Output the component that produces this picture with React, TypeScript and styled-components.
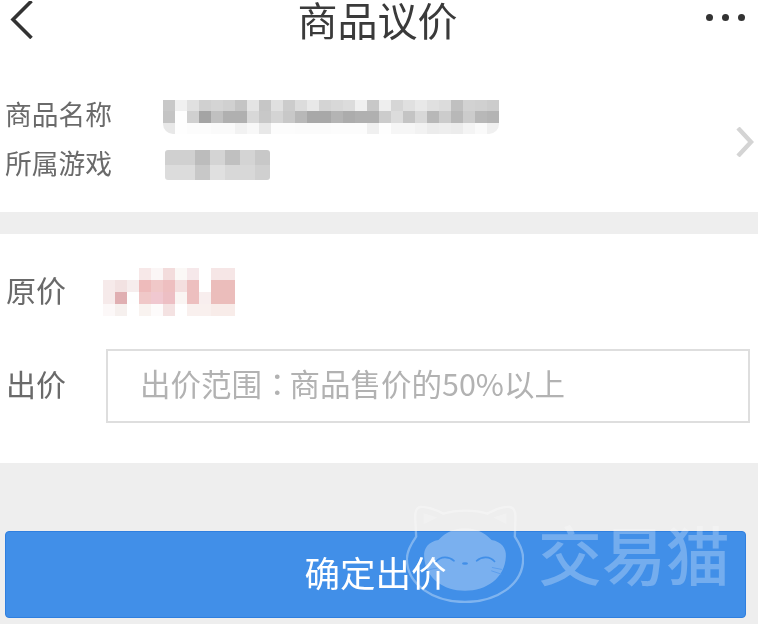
import styled, { createGlobalStyle } from 'styled-components'

const NAME_CELLS = [
  ['c8', 'f0', 'e0', 'd0', 'd4', 'd0', 'c4', 'e4', 'c6', 'e0', 'cc', 'dc', 'e8', 'd4', 'd8', 'dc', 'f0', 'c8', 'ee', 'd6', 'e0', 'e8', 'e0', 'dc', 'c0', 'd2', 'd0', 'cc'],
  ['c4', 'fe', 'd0', 'a4', 'c0', 'b0', 'b0', 'd8', 'c8', 'd4', 'c8', 'b8', 'a8', 'a8', 'b4', 'ac', 'b0', 'b0', 'cc', 'dc', 'c4', 'd8', 'b8', 'cc', 'b8', 'cc', 'b8', 'b4'],
  ['e8', 'fe', 'fc', 'fc', 'fa', 'fa', 'f2', 'f8', 'e8', 'fc', 'fc', 'fb', 'fb', 'fb', 'fc', 'fc', 'fc', 'f0', 'fe', 'f6', 'f6', 'f2', 'ec', 'ee', 'ec', 'f4', 'fa', 'f0'],
].map((row) => row.map((v) => `#${v}${v}${v}`))

const GAME_CELLS = [
  ['d0', 'd0', 'bc', 'd4', 'c0', 'd4', 'c8'],
  ['dc', 'dc', 'c8', 'e0', 'd8', 'd8', 'd0'],
].map((row) => row.map((v) => `#${v}${v}${v}`))

const PRICE_CELLS = [
  ['#ffffff', '#ffffff', '#ffffff', '#f7e8e8', '#fbf6f6', '#f3dcdc', '#fbf8f6', '#f6e8ea', '#ffffff', '#f6e6e6', '#f6e6e6'],
  ['#f6eaea', '#f2e2e2', '#f6eded', '#eebbbb', '#f0c8c8', '#eebfc0', '#f4dfdf', '#edbfbf', '#ffffff', '#ebbdbb', '#ebbdbb'],
  ['#f6eaea', '#e0afb2', '#fefefe', '#f0c8c8', '#f0c8d0', '#edbfc4', '#faf5f3', '#edbfbf', '#f8eeee', '#ebbdbb', '#ebbdbb'],
  ['#fcf8f8', '#f6f0ee', '#ffffff', '#f9f3f0', '#fdfbfb', '#f4e2e2', '#ffffff', '#f9f0ee', '#f9f0ee', '#f8ece9', '#f8ece9'],
]

const GlobalStyle = createGlobalStyle`
  html, body {
    margin: 0;
    padding: 0;
    background: #fff;
  }

  body {
    font-family: "Noto Sans CJK SC", "Noto Sans", sans-serif;
  }
`

const Page = styled.div`
  position: relative;
  width: 758px;
  height: 624px;
  overflow: hidden;
  display: flex;
  flex-direction: column;
  filter: blur(0.4px);
`

const Header = styled.header`
  height: 40px;
  padding: 0 13px 0 10px;
  display: grid;
  grid-template-columns: 1fr auto 1fr;
  align-items: center;
`

const Title = styled.h1`
  margin: 0;
  padding-bottom: 2px;
  font-size: 40px;
  line-height: 38px;
  font-weight: 400;
  color: #3a3a3a;
`

const Dots = styled.div`
  display: flex;
  justify-content: flex-end;
  gap: 9px;
  margin-top: -6px;
`

const Dot = styled.span`
  width: 7px;
  height: 7px;
  border-radius: 50%;
  background: #333;
`

const GoodsSection = styled.section`
  height: 172px;
  padding: 58px 4px 0 5px;
  box-sizing: border-box;
  display: flex;
  justify-content: space-between;
`

const GoodsRows = styled.div`
  display: flex;
  flex-direction: column;
  gap: 14px;
`

const GoodsRow = styled.div`
  height: 35px;
  display: flex;
  align-items: center;
  gap: 51px;
`

const GoodsLabel = styled.span`
  padding-bottom: 4px;
  font-size: 26.75px;
  line-height: 31px;
  color: #6a6a6a;
`

const Arrow = styled.svg`
  width: 18px;
  height: 30px;
  margin-top: 29px;
`

const Mosaic = styled.div<{ $cols: number; $cell: number; $rowHeight: number }>`
  display: grid;
  grid-template-columns: repeat(${({ $cols }) => $cols}, ${({ $cell }) => $cell}px);
  grid-auto-rows: ${({ $rowHeight }) => $rowHeight}px;
  flex-shrink: 0;
`

const NameMosaic = styled(Mosaic)`
  margin-top: 3px;
  border-radius: 0 0 10px 10px;
  overflow: hidden;
`

const GameMosaic = styled(Mosaic)`
  margin-left: 2px;
  border-radius: 3px;
  overflow: hidden;
`

const PriceMosaic = styled(Mosaic)`
  margin-left: -3px;
`

const Cell = styled.i<{ $color: string }>`
  background: ${({ $color }) => $color};
`

const Divider = styled.div`
  height: 22px;
  background: #eeeeee;
`

const OfferSection = styled.section`
  height: 229px;
  padding: 34px 8px 0 6px;
  box-sizing: border-box;
  display: flex;
  flex-direction: column;
  gap: 33px;
`

const OfferRow = styled.div<{ $height: number }>`
  height: ${({ $height }) => $height}px;
  display: flex;
  align-items: center;
`

const OfferLabel = styled.span`
  width: 100px;
  flex-shrink: 0;
  padding-bottom: 6px;
  font-size: 30px;
  line-height: 36px;
  color: #6a6a6a;
`

const OfferInput = styled.div`
  flex: 1;
  height: 74px;
  box-sizing: border-box;
  border: 2px solid #dedede;
  padding: 0 0 6px 32px;
  display: flex;
  align-items: center;
  font-size: 30.5px;
  color: #b2b2b2;
  white-space: nowrap;
`

const CenteredColon = styled.span`
  margin-right: -3px;
  font-family: "Noto Sans CJK TC", sans-serif;
`

const Footer = styled.footer`
  flex: 1;
  background: #eeeeee;
  padding: 68px 12px 0 5px;
`

const SubmitButton = styled.button`
  display: block;
  width: 100%;
  height: 87px;
  padding: 0 0 6px;
  border: 1px solid #2f7fdf;
  border-radius: 4px;
  background: #418fe8;
  color: #fff;
  font-family: inherit;
  font-size: 35.5px;
  line-height: 80px;
`

const Watermark = styled.div`
  position: absolute;
  left: 406px;
  top: 505px;
  display: flex;
  align-items: flex-start;
  gap: 14px;
  pointer-events: none;
`

const CatLogo = styled.svg`
  width: 118px;
  height: 98px;
`

const WatermarkText = styled.span`
  margin-top: 11px;
  font-size: 64px;
  line-height: 72px;
  font-weight: 500;
  color: rgba(255, 255, 255, 0.27);
  white-space: nowrap;
`

const PixelBlock = ({ cells, block: Block, cell, rowHeight }: {
  cells: string[][];
  block: typeof Mosaic;
  cell: number;
  rowHeight: number;
}) => (
  <Block $cols={cells[0].length} $cell={cell} $rowHeight={rowHeight} aria-hidden>
    {cells.flat().map((color, i) => <Cell key={i} $color={color} />)}
  </Block>
)

const CatMark = () => (
  <CatLogo viewBox="18 30 354 295">
    <path
      d="M60 36 C85 34 110 46 130 56 C170 44 225 44 262 56 C285 44 305 34 330 36 C343 38 347 50 347 66 L345 125 C362 150 370 170 370 192 C370 270 290 322 195 322 C100 322 20 270 20 192 C20 170 32 148 48 125 L45 66 C45 50 48 38 60 36 Z"
      fill="none"
      stroke="rgba(255,255,255,0.33)"
      strokeWidth="7"
    />
    <path d="M70 55 L112 68 L70 88 Z" fill="rgba(255,255,255,0.22)" />
    <path d="M320 55 L280 68 L320 88 Z" fill="rgba(255,255,255,0.22)" />
    <path
      d="M195 100 C238 100 262 122 275 135 C305 140 320 160 318 185 C315 250 260 288 195 288 C130 288 75 250 72 185 C70 160 85 140 115 135 C128 122 152 100 195 100 Z"
      fill="rgba(255,255,255,0.3)"
    />
    <path d="M108 200 C122 184 146 184 162 198" fill="none" stroke="#418fe8" strokeWidth="5" strokeLinecap="round" />
    <path d="M230 198 C246 184 270 184 284 200" fill="none" stroke="#418fe8" strokeWidth="5" strokeLinecap="round" />
    <ellipse cx="195" cy="206" rx="9" ry="4" fill="#418fe8" />
    <path d="M276 218 L306 224 M274 228 L304 238 M88 224 L112 220" fill="none" stroke="#5b9eec" strokeWidth="3" />
  </CatLogo>
)

const App = () => (
  <Page>
    <GlobalStyle />

    <Header>
      <svg width="24" height="38" viewBox="0 0 24 38">
        <path d="M21.5 0 L3 18.5 L21.5 37" fill="none" stroke="#333" strokeWidth="3.6" />
      </svg>
      <Title>商品议价</Title>
      <Dots>
        <Dot />
        <Dot />
        <Dot />
      </Dots>
    </Header>

    <GoodsSection>
      <GoodsRows>
        <GoodsRow>
          <GoodsLabel>商品名称</GoodsLabel>
          <PixelBlock cells={NAME_CELLS} block={NameMosaic} cell={12} rowHeight={11.5} />
        </GoodsRow>
        <GoodsRow>
          <GoodsLabel>所属游戏</GoodsLabel>
          <PixelBlock cells={GAME_CELLS} block={GameMosaic} cell={15} rowHeight={15} />
        </GoodsRow>
      </GoodsRows>
      <Arrow viewBox="0 0 18 30">
        <path d="M2 1 L15 15 L2 29" fill="none" stroke="#d4d4d4" strokeWidth="4.4" />
      </Arrow>
    </GoodsSection>

    <Divider />

    <OfferSection>
      <OfferRow $height={48}>
        <OfferLabel>原价</OfferLabel>
        <PixelBlock cells={PRICE_CELLS} block={PriceMosaic} cell={12} rowHeight={12} />
      </OfferRow>
      <OfferRow $height={74}>
        <OfferLabel>出价</OfferLabel>
        <OfferInput>
          <span>出价范围<CenteredColon>：</CenteredColon>商品售价的50%以上</span>
        </OfferInput>
      </OfferRow>
    </OfferSection>

    <Footer>
      <SubmitButton>确定出价</SubmitButton>
    </Footer>

    <Watermark>
      <CatMark />
      <WatermarkText>交易猫</WatermarkText>
    </Watermark>
  </Page>
)

export default App
